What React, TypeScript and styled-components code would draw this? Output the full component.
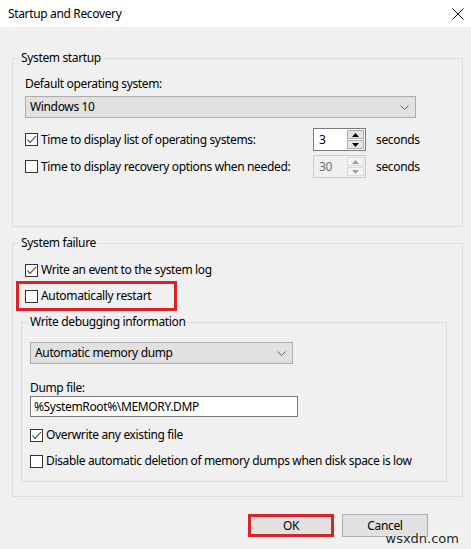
import styled, { createGlobalStyle } from "styled-components"

const GlobalStyle = createGlobalStyle`
  html, body {
    margin: 0;
    padding: 0;
    background: #f0f0f0;
  }
  body {
    font-family: "Segoe UI", "Noto Sans", "Open Sans", sans-serif;
    font-size: 12px;
    letter-spacing: -0.35px;
    color: #000;
  }
`

const Window = styled.div`
  position: relative;
  width: 471px;
  height: 549px;
  background: #f0f0f0;
  display: flex;
  flex-direction: column;
  overflow: hidden;
`

const TitleBar = styled.div`
  height: 27px;
  flex: none;
  background: #fff;
  display: flex;
  align-items: center;
  justify-content: space-between;
  padding: 0 5px 0 8px;
`

const Title = styled.span`
  font-size: 12px;
  line-height: 16px;
`

const CloseButton = styled.button`
  width: 16px;
  height: 16px;
  border: 0;
  padding: 0;
  background: none;
  display: flex;
  align-items: center;
  justify-content: center;
`

const Content = styled.div`
  padding: 0 8px 0 12px;
  display: flex;
  flex-direction: column;
`

const Group = styled.fieldset<{ $top: number; $left?: number }>`
  margin: ${(p) => p.$top}px 0 0 ${(p) => p.$left ?? 0}px;
  padding: 0;
  min-width: 0;
  border: 1px solid #dcdcdc;
`

const Legend = styled.legend`
  margin-left: 6px;
  padding: 0 2px;
  font-size: 12px;
  line-height: 14px;
`

const GroupBody = styled.div<{ $pad: string }>`
  display: flex;
  flex-direction: column;
  padding: ${(p) => p.$pad};
`

const Caption = styled.div<{ $top: number }>`
  margin-top: ${(p) => p.$top}px;
  line-height: 16px;
`

const Select = styled.div<{ $width: number; $top: number }>`
  width: ${(p) => p.$width}px;
  height: 22px;
  margin-top: ${(p) => p.$top}px;
  box-sizing: border-box;
  border: 1px solid #adadad;
  background: #e1e1e1;
  display: flex;
  align-items: center;
  justify-content: space-between;
  padding: 0 6px 0 4px;
  line-height: 16px;
`

const TextBox = styled.div`
  width: 268px;
  height: 21px;
  box-sizing: border-box;
  border: 1px solid #7a7a7a;
  background: #fff;
  display: flex;
  align-items: center;
  padding-left: 3px;
`

const Row = styled.div<{ $top?: number; $highlight?: boolean }>`
  display: flex;
  align-items: center;
  height: 26px;
  margin-top: ${(p) => p.$top ?? 0}px;
  ${(p) =>
    p.$highlight &&
    `
    align-self: flex-start;
    margin-left: -7px;
    padding: 0 24px 0 7px;
    outline: 3px solid #d8232a;
    outline-offset: -1px;
  `}
`

const TimeRow = styled.div<{ $top: number }>`
  display: grid;
  grid-template-columns: 278px 53px auto;
  column-gap: 10px;
  align-items: center;
  margin-top: ${(p) => p.$top}px;
`

const CheckLabel = styled.label`
  display: flex;
  align-items: center;
  gap: 3px;
  line-height: 16px;
  white-space: nowrap;
  min-width: 0;
`

const Box = styled.span`
  width: 13px;
  height: 13px;
  box-sizing: border-box;
  border: 1px solid #333;
  background: #fff;
  display: flex;
  align-items: center;
  justify-content: center;
  flex: none;
`

const Spin = styled.div<{ $disabled?: boolean }>`
  height: 23px;
  box-sizing: border-box;
  border: 1px solid ${(p) => (p.$disabled ? "#cccccc" : "#7a7a7a")};
  background: ${(p) => (p.$disabled ? "#f0f0f0" : "#fff")};
  color: ${(p) => (p.$disabled ? "#6d6d6d" : "#000")};
  display: flex;
`

const SpinValue = styled.div`
  flex: 1;
  padding-left: 5px;
  display: flex;
  align-items: center;
`

const SpinButtons = styled.div`
  width: 17px;
  display: flex;
  flex-direction: column;
  gap: 1px;
  padding: 1px 1px 1px 0;
`

const SpinButton = styled.div<{ $disabled?: boolean }>`
  flex: 1;
  box-sizing: border-box;
  border: 1px solid ${(p) => (p.$disabled ? "#d9d9d9" : "#adadad")};
  background: ${(p) => (p.$disabled ? "#f4f4f4" : "#e5e5e5")};
  display: flex;
  align-items: center;
  justify-content: center;
`

const Buttons = styled.div`
  display: flex;
  justify-content: flex-end;
  gap: 8px;
  margin: 17px 43px 0 0;
`

const Button = styled.button<{ $highlight?: boolean }>`
  width: 86px;
  height: 23px;
  box-sizing: border-box;
  border: ${(p) => (p.$highlight ? "3px solid #d8232a" : "1px solid #adadad")};
  background: #e1e1e1;
  font-family: inherit;
  font-size: 12px;
  letter-spacing: inherit;
  color: #000;
  padding: 0;
`

const Watermark = styled.div`
  position: absolute;
  right: 12px;
  bottom: 3px;
  font-family: "DejaVu Sans", sans-serif;
  font-size: 13px;
  letter-spacing: 0;
  color: #222;
  text-shadow: 0 0 2px #fff, 0 0 2px #fff;
`

const Chevron = () => (
  <svg width="9" height="5" viewBox="0 0 9 5">
    <polyline points="0.5,0.5 4.5,4.5 8.5,0.5" fill="none" stroke="#606060" strokeWidth="1" />
  </svg>
)

const Check = ({ checked }: { checked?: boolean }) => (
  <Box>
    {checked && (
      <svg width="11" height="11" viewBox="0 0 11 11">
        <polyline points="1.5,5.5 4,8.5 10,2" fill="none" stroke="#333" strokeWidth="1.1" />
      </svg>
    )}
  </Box>
)

const Arrow = ({ up, color }: { up?: boolean; color: string }) => (
  <svg width="7" height="4" viewBox="0 0 7 4">
    <polygon points={up ? "0,4 7,4 3.5,0" : "0,0 7,0 3.5,4"} fill={color} />
  </svg>
)

type TSpinProps = { value: string; disabled?: boolean }

const SpinBox = ({ value, disabled }: TSpinProps) => {
  const c = disabled ? "#a0a0a0" : "#000"
  return (
    <Spin $disabled={disabled}>
      <SpinValue>{value}</SpinValue>
      <SpinButtons>
        <SpinButton $disabled={disabled}>
          <Arrow up color={c} />
        </SpinButton>
        <SpinButton $disabled={disabled}>
          <Arrow color={c} />
        </SpinButton>
      </SpinButtons>
    </Spin>
  )
}

const App = () => {
  return (
    <Window>
      <GlobalStyle />
      <TitleBar>
        <Title>Startup and Recovery</Title>
        <CloseButton aria-label="Close">
          <svg width="12" height="12" viewBox="0 0 12 12">
            <path d="M0.5 0.5 L11.5 11.5 M11.5 0.5 L0.5 11.5" stroke="#111" strokeWidth="1" />
          </svg>
        </CloseButton>
      </TitleBar>

      <Content>
        <Group $top={24}>
          <Legend>System startup</Legend>
          <GroupBody $pad="0 12px 48px 12px">
            <Caption $top={11}>Default operating system:</Caption>
            <Select $width={391} $top={4}>
              <span>Windows 10</span>
              <Chevron />
            </Select>
            <TimeRow $top={10}>
              <CheckLabel>
                <Check checked />
                Time to display list of operating systems:
              </CheckLabel>
              <SpinBox value="3" />
              <span>seconds</span>
            </TimeRow>
            <TimeRow $top={4}>
              <CheckLabel>
                <Check />
                Time to display recovery options when needed:
              </CheckLabel>
              <SpinBox value="30" disabled />
              <span>seconds</span>
            </TimeRow>
          </GroupBody>
        </Group>

        <Group $top={9}>
          <Legend>System failure</Legend>
          <GroupBody $pad="7px 15px 14px 12px">
            <Row>
              <CheckLabel>
                <Check checked />
                Write an event to the system log
              </CheckLabel>
            </Row>
            <Row $highlight>
              <CheckLabel>
                <Check />
                Automatically restart
              </CheckLabel>
            </Row>

            <Group $top={6} $left={-4}>
              <Legend>Write debugging information</Legend>
              <GroupBody $pad="0 8px 7px 8px">
                <Select $width={263} $top={13}>
                  <span>Automatic memory dump</span>
                  <Chevron />
                </Select>
                <Caption $top={16}>Dump file:</Caption>
                <TextBox>%SystemRoot%\MEMORY.DMP</TextBox>
                <Row $top={5}>
                  <CheckLabel>
                    <Check checked />
                    Overwrite any existing file
                  </CheckLabel>
                </Row>
                <Row>
                  <CheckLabel>
                    <Check />
                    Disable automatic deletion of memory dumps when disk space is low
                  </CheckLabel>
                </Row>
              </GroupBody>
            </Group>
          </GroupBody>
        </Group>
      </Content>

      <Buttons>
        <Button $highlight>OK</Button>
        <Button>Cancel</Button>
      </Buttons>

      <Watermark>wsxdn.com</Watermark>
    </Window>
  )
}

export default App
